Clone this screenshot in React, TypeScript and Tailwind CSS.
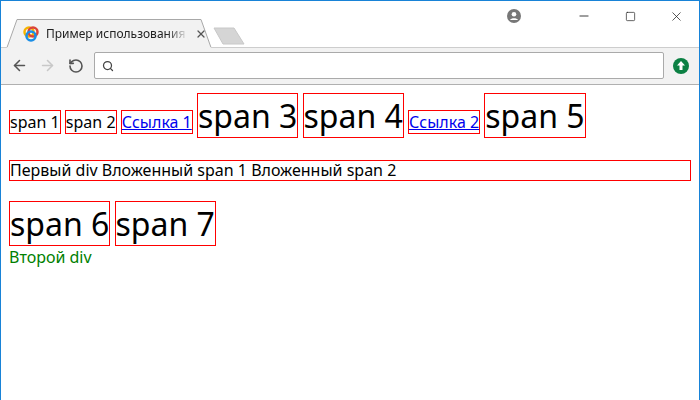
import React from 'react';
import { ArrowLeft, ArrowRight, RotateCw, Search, X, Minus, Square } from 'lucide-react';

const box = '[border:1px_solid_#ff0000]';
const big = '[font-size:32px]';
const green = '[border-left:4px_solid_#008000]';

function Favicon() {
  return (
    <svg width="16" height="16" viewBox="0 0 16 16">
      <circle cx="6" cy="6" r="4.5" fill="none" stroke="#f4b400" strokeWidth="2.5" />
      <circle cx="10" cy="6" r="4.5" fill="none" stroke="#db4437" strokeWidth="2.5" />
      <circle cx="8" cy="10" r="4.5" fill="none" stroke="#1a8ee6" strokeWidth="2.5" />
    </svg>
  );
}

export default function App() {
  return (
    <div className="w-[700px] h-[400px] overflow-hidden bg-white border border-[#1883d7] border-b-0 flex flex-col [font-family:'Liberation_Serif',serif]">
      {/* Title bar + tabs */}
      <div className="h-[46px] relative [font-family:'Liberation_Sans',Arial,sans-serif]">
        <div className="absolute right-0 top-0 flex items-center h-[30px]">
          <svg width="14" height="14" viewBox="0 0 14 14" className="mr-[40px]">
            <circle cx="7" cy="7" r="7" fill="#777" />
            <circle cx="7" cy="5.2" r="2.3" fill="#fff" />
            <path d="M3 11 C4 8.5 10 8.5 11 11 Z" fill="#fff" />
          </svg>
          <div className="w-[46px] flex justify-center"><Minus size={14} strokeWidth={1.5} color="#222" /></div>
          <div className="w-[46px] flex justify-center"><Square size={11} strokeWidth={1.5} color="#222" /></div>
          <div className="w-[46px] flex justify-center"><X size={15} strokeWidth={1.2} color="#222" /></div>
        </div>
        <svg className="absolute left-0 top-[17px]" width="700" height="30" viewBox="0 0 700 30">
          <path d="M0 29.5 H6 L16 1.5 H200 L210 29.5 H699" fill="#f2f2f2" stroke="#a8a8a8" />
          <path d="M0 30 H700" stroke="#f2f2f2" />
          <path d="M213 10 H233 L243 26 H222 Z" fill="#d5d5d5" stroke="#c8c8c8" />
        </svg>
        <div className="absolute left-[22px] top-[24px] flex items-center gap-[7px]">
          <Favicon />
          <span className="text-[12px] text-[#222] w-[142px] whitespace-nowrap overflow-hidden [mask-image:linear-gradient(to_right,black_85%,transparent)]">
            Пример использования
          </span>
          <X size={12} strokeWidth={2.5} color="#555" />
        </div>
      </div>
      {/* Toolbar */}
      <div className="h-[38px] bg-[#f2f2f2] border-b border-[#b0b0b0] flex items-center px-[10px]">
        <ArrowLeft size={17} color="#555" strokeWidth={2.2} />
        <ArrowRight size={17} color="#c8c8c8" strokeWidth={2.2} className="ml-[11px]" />
        <RotateCw size={16} color="#555" strokeWidth={2.4} className="ml-[12px] -scale-x-100" />
        <div className="ml-[10px] w-[570px] h-[27px] bg-white border border-[#aaa] rounded-[2px] flex items-center px-[7px]">
          <Search size={12} color="#444" strokeWidth={2.5} />
        </div>
        <div className="ml-auto w-[16px] h-[16px] rounded-full bg-[#0b8043] flex items-center justify-center">
          <svg width="8" height="9" viewBox="0 0 8 9"><path d="M4 0 L8 4.5 H5.5 V9 H2.5 V4.5 H0 Z" fill="#fff" /></svg>
        </div>
      </div>
      {/* Page */}
      <div className="px-[8px] pt-[7px] text-[16px] text-black">
        <div>
          <span className={box}>span 1</span> <span className={box}>span 2</span>{' '}
          <a href="#" className={`${box} text-[#0000ee] underline`}>Ссылка 1</a>{' '}
          <span className={`${box} ${big}`}>span 3</span> <span className={`${box} ${big}`}>span 4</span>{' '}
          <a href="#" className={`${box} text-[#0000ee] underline`}>Ссылка 2</a>{' '}
          <span className={`${box} ${green} ${big}`}>span 5</span>
        </div>
        <div className={`${box} ${green} mt-[20px] leading-[19px]`}>
          Первый div Вложенный span 1 Вложенный span 2
        </div>
        <div className="mt-[19px]">
          <span className={`${box} ${green} ${big}`}>span 6</span>{' '}
          <span className={`${box} ${green} ${big}`}>span 7</span>
        </div>
        <div className="text-[#008000] leading-[18px]">Второй div</div>
      </div>
    </div>
  );
}
